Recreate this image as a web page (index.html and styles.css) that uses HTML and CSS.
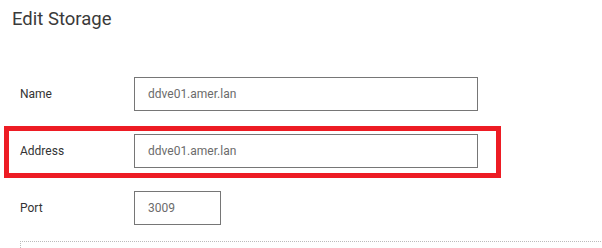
FILE: index.html
```html
<!DOCTYPE html>
<html lang="en">

<head>
    <meta charset="UTF-8">
    <meta name="viewport" content="width=device-width, initial-scale=1.0">
    <title>Edit Storage</title>
    <link rel="stylesheet" href="styles.css">
</head>

<body>
    <h2 class="title">Edit Storage</h2>

    <form class="storage-form">
        <div class="form-row">
            <label for="name">Name</label>
            <input type="text" id="name" class="field" value="ddve01.amer.lan">
        </div>
        <div class="form-row highlight">
            <label for="address">Address</label>
            <input type="text" id="address" class="field" value="ddve01.amer.lan">
        </div>
        <div class="form-row last">
            <label for="port">Port</label>
            <input type="text" id="port" class="field short" value="3009">
        </div>
        <div class="section-box"></div>
    </form>
</body>

</html>
```

FILE: styles.css
```css
:root {
    --text: #333333;
    --muted: #6b6b6b;
    --border: #767676;
    --mark: #ed1c24;
}

html,
body {
    overflow: hidden;
}

body {
    margin: 0;
    padding: 0;
    background: #ffffff;
    color: var(--text);
    font-family: Roboto, "Liberation Sans", Arial, sans-serif;
}

.title {
    margin: 0;
    padding: 9px 0 0 12px;
    font-size: 18.5px;
    font-weight: 400;
    line-height: 21px;
    color: #3a3a3a;
}

.storage-form {
    margin-top: 47px;
    padding-left: 4px;
}

.form-row {
    display: flex;
    align-items: center;
    width: 497px;
    box-sizing: border-box;
    padding-left: 16px;
    margin-bottom: 15px;
}

.form-row label {
    width: 114px;
    font-size: 12px;
    color: var(--text);
}

.form-row.highlight {
    border: 5px solid var(--mark);
    padding: 3px 0 5px 11px;
    margin-bottom: 13px;
}

.form-row.last {
    margin-bottom: 16px;
}

.field {
    width: 344px;
    height: 34px;
    box-sizing: border-box;
    border: 1px solid var(--border);
    border-radius: 0;
    padding: 0 13px;
    margin: 0;
    font-family: inherit;
    font-size: 12px;
    color: var(--muted);
    background: #ffffff;
    outline: none;
}

.field.short {
    width: 87px;
}

.section-box {
    margin-left: 16px;
    width: 600px;
    height: 6px;
    border-top: 1px dotted #bbbbbb;
    border-left: 1px dotted #bbbbbb;
}
```
